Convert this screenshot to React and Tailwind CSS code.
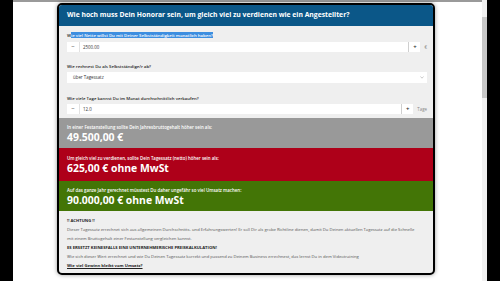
import React from 'react';

// Honorar-Rechner: Festanstellung vs. Selbstständigkeit
const NumberField = ({ value, unit }) => (
  <div className="flex items-center h-[10px]">
    <div className="flex-1 flex items-center h-full bg-white">
      <span className="w-[13px] h-full flex items-center justify-center border-r border-[#e2e2e2] text-[6px] text-[#333]">−</span>
      <span className="flex-1 pl-[3px] text-[4.4px] text-[#333]">{value}</span>
      <span className="w-[12px] h-full flex items-center justify-center border-l border-[#cfcfcf] text-[6px] font-bold text-[#333]">+</span>
    </div>
    <span className="pl-[4px] text-[4.4px] text-[#888]">{unit}</span>
  </div>
);

const ResultBlock = ({ bg, height, note, value }) => (
  <div className={`${bg} ${height} px-[8px] flex flex-col justify-center text-white`}>
    <p className="text-[4.4px] leading-[8px] font-semibold">{note}</p>
    <p className="text-[10.4px] leading-[13px] font-bold">{value}</p>
  </div>
);

export default function App() {
  return (
    <div className="w-[500px] h-[281px] bg-black flex overflow-hidden font-['Open_Sans',sans-serif]">
      <div className="w-[13px] shrink-0" />

      {/* page */}
      <div className="w-[469px] shrink-0 bg-white border-t-2 border-[#9a9a9a] pl-[44px] pt-[1px]">
        <div className="w-[378px] h-[272px] border-2 border-black rounded-[5px] overflow-hidden bg-[#efefef] shadow-[0_0_4px_rgba(0,0,0,0.4)]">
          {/* header */}
          <div className="h-[21px] bg-[#0b5788] px-[8px] flex items-center">
            <h1 className="text-white font-bold text-[6.8px]">
              Wie hoch muss Dein Honorar sein, um gleich viel zu verdienen wie ein Angestellter?
            </h1>
          </div>

          {/* inputs */}
          <div className="pl-[8px] pr-[6px] pt-[5px] pb-[4px]">
            <div className="h-[8px] flex items-center text-[4.3px] font-semibold text-[#222]">
              <span>W</span>
              <span className="bg-[#3d8ee0] text-white">ie viel Nette willst Du mit Deiner Selbstständigkeit monatlich haben?</span>
            </div>
            <div className="mt-[3px]">
              <NumberField value="2500.00" unit="€" />
            </div>

            <div className="mt-[10px] h-[8px] flex items-center text-[4.3px] font-semibold text-[#222]">
              Wie rechnest Du als Selbstständige/r ab?
            </div>
            <div className="mt-[2px] h-[11px] bg-white flex items-center justify-between pl-[6px] pr-[3px]">
              <span className="text-[4.4px] text-[#333]">über Tagessatz</span>
              <svg width="4" height="3" viewBox="0 0 4 3">
                <path d="M0.5 0.5 L2 2.2 L3.5 0.5" fill="none" stroke="#aaa" strokeWidth="0.6" />
              </svg>
            </div>

            <div className="mt-[11px] h-[8px] flex items-center text-[4.3px] font-semibold text-[#222]">
              Wie viele Tage kannst Du im Monat durchschnittlich verkaufen?
            </div>
            <div className="mt-[2px]">
              <NumberField value="12.0" unit="Tage" />
            </div>
          </div>

          {/* results */}
          <ResultBlock
            bg="bg-[#999999]"
            height="h-[30px]"
            note="In einer Festanstellung sollte Dein Jahresbruttogehalt höher sein als:"
            value="49.500,00 €"
          />
          <ResultBlock
            bg="bg-[#ae0019]"
            height="h-[33px]"
            note="Um gleich viel zu verdienen, sollte Dein Tagessatz (netto) höher sein als:"
            value="625,00 € ohne MwSt"
          />
          <ResultBlock
            bg="bg-[#437506]"
            height="h-[30px]"
            note="Auf das ganze Jahr gerechnet müsstest Du daher ungefähr so viel Umsatz machen:"
            value="90.000,00 € ohne MwSt"
          />

          {/* hints */}
          <div className="px-[8px] pt-[5px] text-[4.2px] leading-[9px] text-[#555]">
            <p className="font-bold text-[#222]">!! ACHTUNG !!</p>
            <p>
              Dieser Tagessatz errechnet sich aus allgemeinen Durchschnitts- und Erfahrungswerten! Er soll Dir als grobe Richtline dienen, damit Du Deinen aktuellen Tagessatz auf die Schnelle
              <br />
              mit einem Bruttogehalt einer Festanstellung vergleichen kannst.
            </p>
            <p className="font-bold text-[#222]">ES ERSETZT KEINESFALLS EINE UNTERNEHMERISCHE PREISKALKULATION!</p>
            <p>
              Wie sich dieser Wert errechnet und wie Du Deinen Tagessatz korrekt und passend zu Deinem Business errechnest, das lernst Du in dem Videotraining
            </p>
            <p className="font-bold text-[#222] underline">Wie viel Gewinn bleibt vom Umsatz?</p>
          </div>
        </div>
      </div>

      {/* scrollbar */}
      <div className="w-[5px] shrink-0 bg-[#f1f1f1] pt-[17px]">
        <div className="h-[81px] bg-[#c8c8c8]" />
      </div>
      <div className="flex-1" />
    </div>
  );
}
